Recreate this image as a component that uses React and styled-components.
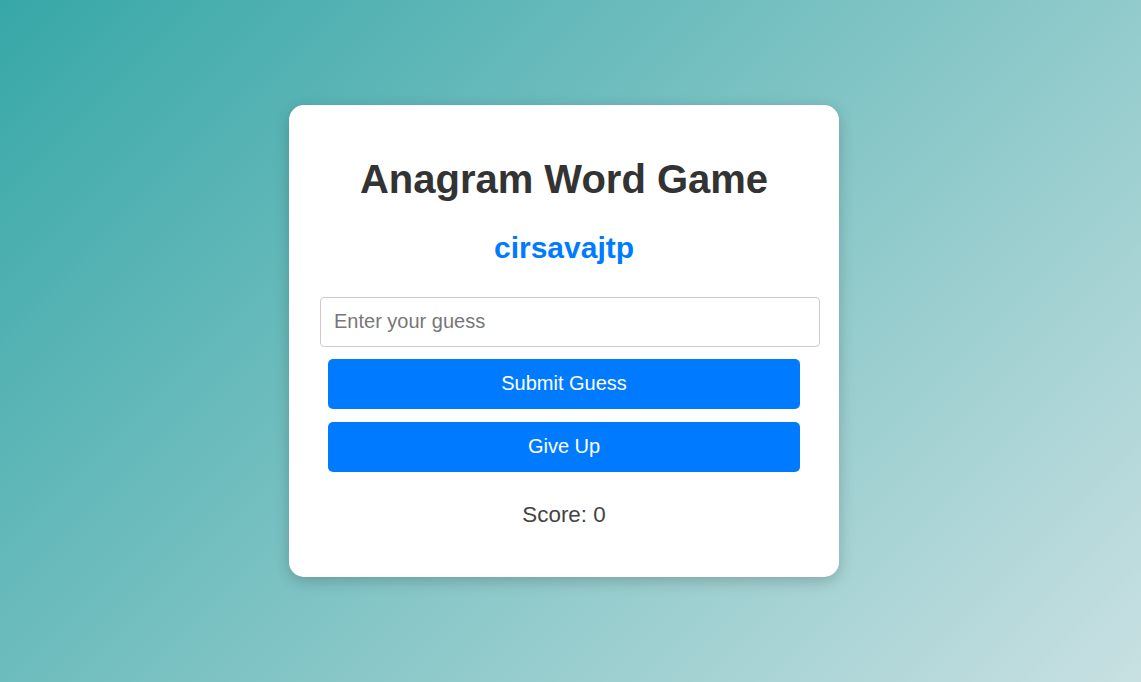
import React, { useState } from "react";
import styled, { createGlobalStyle } from "styled-components";

const GlobalStyle = createGlobalStyle`
  html, body {
    margin: 0;
    padding: 0;
  }
  body {
    font-family: "Liberation Sans", Arial, sans-serif;
    background: linear-gradient(135deg, #37a7a7 0%, #c8e0e2 100%);
    min-height: 100vh;
  }
`;

const Page = styled("div")`
  min-height: 100vh;
  display: flex;
  align-items: center;
  justify-content: center;
  padding-right: 13px;
  box-sizing: border-box;
`;

const Card = styled("div")`
  width: 550px;
  box-sizing: border-box;
  background: #ffffff;
  border-radius: 15px;
  box-shadow: 0 4px 15px rgba(0, 0, 0, 0.2);
  padding: 30px 31px 49px;
  display: flex;
  flex-direction: column;
  align-items: center;
`;

const Title = styled("h1")`
  margin: 21px 0 0;
  font-size: 40px;
  line-height: 1.15;
  font-weight: 700;
  color: #333333;
`;

const Scrambled = styled("h2")`
  margin: 29px 0 0;
  font-size: 30px;
  line-height: 1.15;
  font-weight: 700;
  color: #007bff;
`;

const GuessInput = styled("input")`
  align-self: flex-start;
  flex-shrink: 0;
  width: 500px;
  height: 50px;
  box-sizing: border-box;
  margin-top: 31px;
  padding: 0 13px;
  border: 1px solid #cccccc;
  border-radius: 4px;
  font-family: inherit;
  font-size: 20px;
  color: #333333;
  outline: none;

  &::placeholder {
    color: #777777;
  }
`;

const Button = styled("button")`
  width: 472px;
  height: 50px;
  margin-top: ${(p) => p.$gap}px;
  border: none;
  border-radius: 5px;
  background: #007bff;
  color: #ffffff;
  font-family: inherit;
  font-size: 20px;
  cursor: pointer;
`;

const Score = styled("p")`
  margin: 30px 0 0;
  font-size: 22.4px;
  line-height: 1.15;
  color: #444444;
`;

const App = () => {
  const [guess, setGuess] = useState("");
  const [score] = useState(0);

  return (
    <>
      <GlobalStyle />
      <Page>
        <Card>
          <Title>Anagram Word Game</Title>
          <Scrambled>cirsavajtp</Scrambled>
          <GuessInput
            type="text"
            placeholder="Enter your guess"
            value={guess}
            onChange={(e) => setGuess(e.target.value)}
          />
          <Button $gap={12}>Submit Guess</Button>
          <Button $gap={13}>Give Up</Button>
          <Score>Score: {score}</Score>
        </Card>
      </Page>
    </>
  );
};

export default App;
